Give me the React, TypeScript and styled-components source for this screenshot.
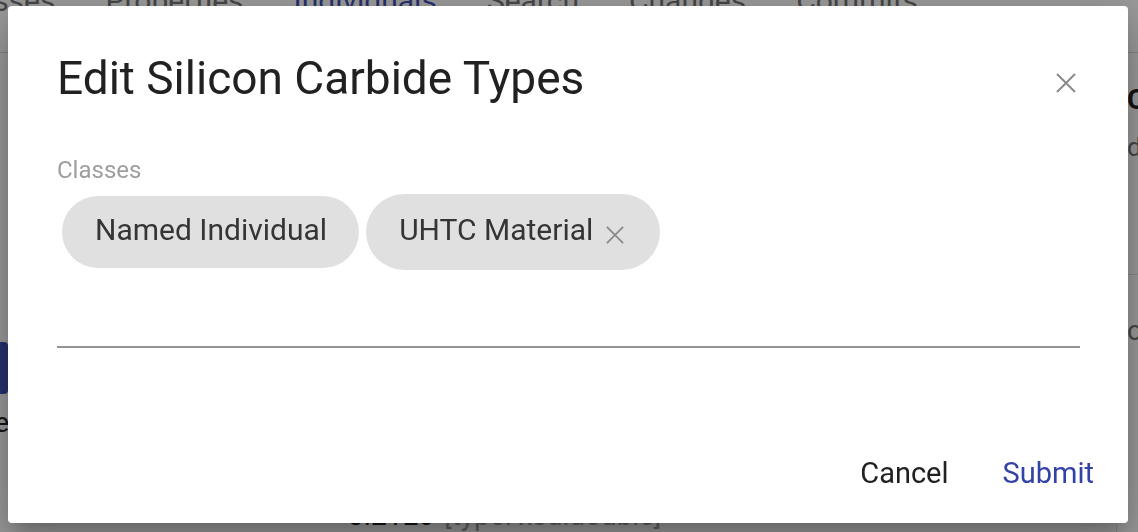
import React from "react";
import styled, { createGlobalStyle } from "styled-components";

const GlobalStyle = createGlobalStyle`
  html, body {
    margin: 0;
    padding: 0;
    height: 100%;
    overflow: hidden;
  }
  body {
    font-family: Roboto, "Noto Sans", "Liberation Sans", sans-serif;
    background: #ffffff;
  }
  #root {
    height: 100%;
  }
`;

/* page behind the dialog */

const Page = styled.div`
  height: 532px;
  overflow: hidden;
  display: flex;
  flex-direction: column;
`;

const TabBar = styled.nav`
  flex-shrink: 0;
  display: flex;
  align-items: flex-start;
  height: 68px;
  margin-top: -16px;
  margin-left: -75px;
  border-bottom: 1px solid #d8d8d8;
`;

const Tab = styled.div<{ $active?: boolean }>`
  padding: 0 25px;
  font-size: 30px;
  line-height: 34px;
  white-space: nowrap;
  color: ${(p) => (p.$active ? "#3f51b5" : "#757575")};
`;

const Main = styled.div`
  flex: 1;
  display: grid;
  grid-template-columns: 1116px 1fr;
`;

const LeftPanel = styled.section`
  display: flex;
  flex-direction: column;
  align-items: flex-start;
`;

const ActionButton = styled.div`
  margin-top: 289px;
  margin-left: -100px;
  width: 108px;
  height: 52px;
  background: #3f51b5;
  border-radius: 4px;
`;

const FieldName = styled.div`
  margin-top: 13px;
  margin-left: -51px;
  width: 60px;
  text-align: right;
  font-size: 28px;
  line-height: 32px;
  color: #212121;
`;

const ValueRow = styled.div`
  margin-top: 61px;
  margin-left: 348px;
  display: flex;
  gap: 10px;
  font-size: 28px;
  line-height: 32px;
  white-space: nowrap;
`;

const ValueText = styled.span<{ $muted?: boolean }>`
  color: ${(p) => (p.$muted ? "#9e9e9e" : "#212121")};
`;

const RightPanel = styled.aside`
  border-left: 1px solid #e0e0e0;
  padding-left: 10px;
  display: flex;
  flex-direction: column;
  white-space: nowrap;
`;

const PanelHeading = styled.div`
  margin-top: 31px;
  font-size: 28px;
  font-weight: 700;
  line-height: 32px;
  color: #212121;
`;

const PanelSub = styled.div`
  margin-top: 16px;
  font-size: 26px;
  line-height: 30px;
  color: #757575;
`;

const PanelDivider = styled.div`
  margin-top: 112px;
  margin-left: -10px;
  border-top: 1px solid #e0e0e0;
`;

const PanelItem = styled.div`
  margin-top: 40px;
  font-size: 28px;
  line-height: 32px;
  color: #757575;
`;

/* dialog */

const Backdrop = styled.div`
  position: fixed;
  inset: 0;
  background: rgba(0, 0, 0, 0.4);
  display: flex;
  align-items: flex-start;
  justify-content: flex-start;
  padding: 6px 0 0 8px;
`;

const Dialog = styled.div`
  width: 1120px;
  height: 517px;
  background: #ffffff;
  border-radius: 4px;
  display: flex;
  flex-direction: column;
  box-shadow: 0 11px 15px -7px rgba(0, 0, 0, 0.2),
    0 24px 38px 3px rgba(0, 0, 0, 0.14), 0 9px 46px 8px rgba(0, 0, 0, 0.12);
`;

const Header = styled.div`
  display: flex;
  justify-content: space-between;
  align-items: flex-start;
  padding: 45px 52px 0 49px;
`;

const Title = styled.h2`
  margin: 0;
  font-size: 46px;
  font-weight: 400;
  line-height: 54px;
  color: #212121;
`;

const CloseButton = styled.button`
  margin-top: 22px;
  padding: 0;
  border: none;
  background: none;
  width: 20px;
  height: 20px;
  display: flex;
  cursor: pointer;
`;

const Body = styled.div`
  display: flex;
  flex-direction: column;
  padding: 0 48px 0 49px;
`;

const FieldLabel = styled.label`
  margin-top: 52px;
  font-size: 24px;
  line-height: 26px;
  color: #9e9e9e;
`;

const ChipRow = styled.div`
  margin-top: 11px;
  height: 76px;
  display: flex;
  align-items: center;
  gap: 7px;
  padding-left: 5px;
`;

const Chip = styled.div<{ $deletable?: boolean }>`
  height: ${(p) => (p.$deletable ? 76 : 72)}px;
  box-sizing: border-box;
  display: flex;
  align-items: center;
  gap: 13px;
  padding: 0 ${(p) => (p.$deletable ? 36 : 32)}px 4px 33px;
  border-radius: 38px;
  background: #e0e0e0;
  font-size: 30px;
  line-height: 36px;
  color: #353535;
  white-space: nowrap;
`;

const ChipDelete = styled.span`
  display: flex;
  margin-top: 10px;
  width: 18px;
  height: 18px;
`;

const InputLine = styled.div`
  margin-top: 76px;
  border-bottom: 2px solid #949494;
`;

const Actions = styled.div`
  margin-top: auto;
  display: flex;
  justify-content: flex-end;
  gap: 54px;
  padding: 0 34px 33px 0;
`;

const TextButton = styled.button<{ $primary?: boolean }>`
  padding: 0;
  border: none;
  background: none;
  font-family: inherit;
  font-size: 29px;
  line-height: 34px;
  color: ${(p) => (p.$primary ? "#3342a5" : "#212121")};
  cursor: pointer;
`;

const Cross = ({ size, color }: { size: number; color: string }) => (
  <svg width={size} height={size} viewBox="0 0 20 20">
    <path d="M1 1 L19 19 M19 1 L1 19" stroke={color} strokeWidth="2" fill="none" />
  </svg>
);

const tabs = ["Classes", "Properties", "Individuals", "Search", "Changes", "Commits"];

function App() {
  return (
    <>
      <GlobalStyle />
      <Page>
        <TabBar>
          {tabs.map((t) => (
            <Tab key={t} $active={t === "Individuals"}>
              {t}
            </Tab>
          ))}
        </TabBar>
        <Main>
          <LeftPanel>
            <ActionButton />
            <FieldName>Type</FieldName>
            <ValueRow>
              <ValueText>3.21E0</ValueText>
              <ValueText $muted>[type: xsd:double]</ValueText>
            </ValueRow>
          </LeftPanel>
          <RightPanel>
            <PanelHeading>Op</PanelHeading>
            <PanelSub>du</PanelSub>
            <PanelDivider />
            <PanelItem>c</PanelItem>
          </RightPanel>
        </Main>
      </Page>
      <Backdrop>
        <Dialog role="dialog">
          <Header>
            <Title>Edit Silicon Carbide Types</Title>
            <CloseButton aria-label="close">
              <Cross size={20} color="#8a8a8a" />
            </CloseButton>
          </Header>
          <Body>
            <FieldLabel>Classes</FieldLabel>
            <ChipRow>
              <Chip>Named Individual</Chip>
              <Chip $deletable>
                UHTC Material
                <ChipDelete>
                  <Cross size={18} color="#8a8a8a" />
                </ChipDelete>
              </Chip>
            </ChipRow>
            <InputLine />
          </Body>
          <Actions>
            <TextButton>Cancel</TextButton>
            <TextButton $primary>Submit</TextButton>
          </Actions>
        </Dialog>
      </Backdrop>
    </>
  );
}

export default App;
